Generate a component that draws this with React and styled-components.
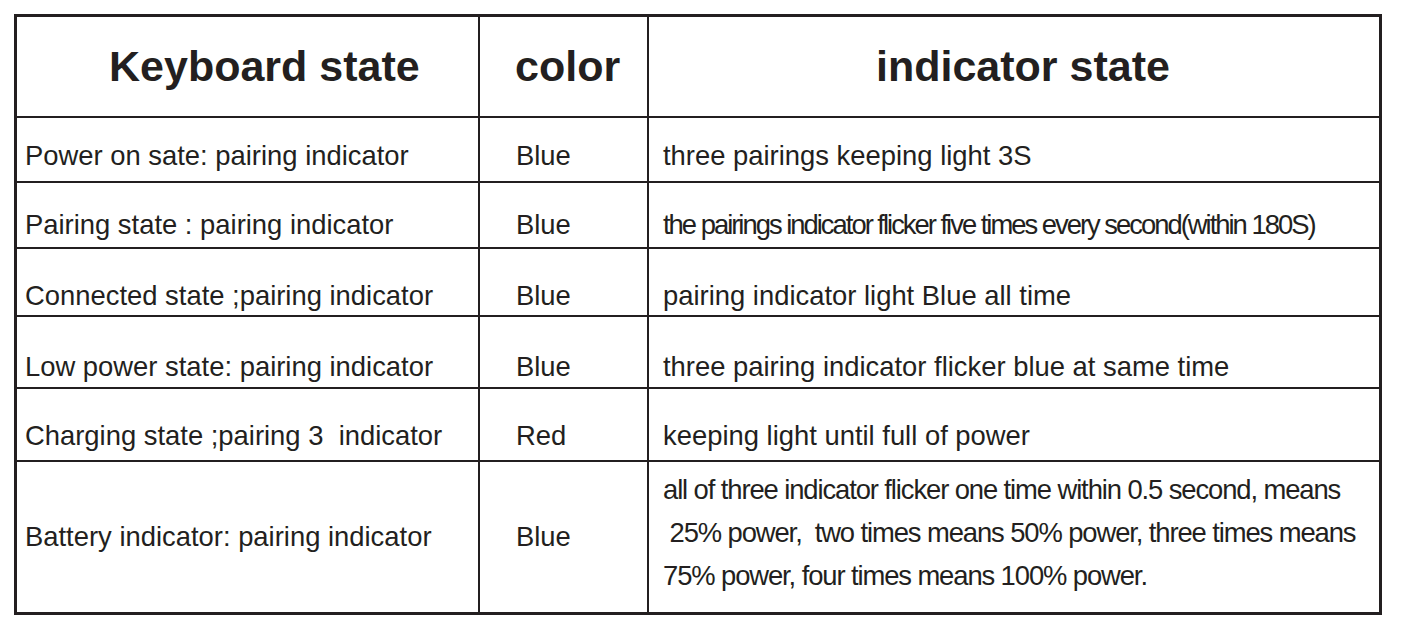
import styled, { createGlobalStyle } from "styled-components"

const GlobalStyle = createGlobalStyle`
body{
margin: 0;
background: #ffffff;
font-family: "Liberation Sans", Arial, sans-serif;
color: #231f20;
}
`

const Page = styled.div`
padding: 14px 0 0 14px;
`

const Table = styled.div`
display: grid;
width: 1362px;
grid-template-columns: 461px 167px 730px;
grid-template-rows: 99px 63px 64px 66px 70px 71px 150px;
gap: 2px;
background: #231f20;
border: 3px solid #231f20;
`

const HeadCell = styled.div`
background: #ffffff;
font-size: 43px;
font-weight: 700;
line-height: 48px;
padding: 25px 0 0 ${p => p.$pl}px;
white-space: pre;
`

const Cell = styled.div`
background: #ffffff;
font-size: 27.4px;
line-height: ${p => p.$lh || 30}px;
letter-spacing: ${p => p.$ls || 0}px;
padding: ${p => p.$pt}px 0 0 ${p => p.$pl}px;
white-space: pre;
overflow: hidden;
`

const Tight = styled.span`
letter-spacing: -2px;
`

const rows = [
  { pt: 23, state: "Power on sate: pairing indicator", color: "Blue", text: "three pairings keeping light 3S" },
  { pt: 27, state: "Pairing state : pairing indicator", color: "Blue", text: "the pairings indicator flicker five times every second(within 180S)", tight: true },
  { pt: 32, state: "Connected state ;pairing indicator", color: "Blue", text: "pairing indicator light Blue all time" },
  { pt: 35, state: "Low power state: pairing indicator", color: "Blue", text: "three pairing indicator flicker blue at same time" },
  { pt: 32, state: "Charging state ;pairing 3  indicator", color: "Red", text: "keeping light until full of power" },
]

const battery = [
  "all of three indicator flicker one time within 0.5 second, means",
  " 25% power,  two times means 50% power, three times means",
  "75% power, four times means 100% power.",
].join("\n")

export default function App() {
  return (
    <Page>
      <GlobalStyle />
      <Table>
        <HeadCell $pl={92}>Keyboard state</HeadCell>
        <HeadCell $pl={35}>color</HeadCell>
        <HeadCell $pl={227}>indicator state</HeadCell>

        {rows.map(r => (
          <>
            <Cell $pt={r.pt} $pl={8}>{r.state}</Cell>
            <Cell $pt={r.pt} $pl={36}>{r.color}</Cell>
            <Cell $pt={r.pt} $pl={14}>{r.tight ? <Tight>{r.text}</Tight> : r.text}</Cell>
          </>
        ))}

        <Cell $pt={60} $pl={8}>Battery indicator: pairing indicator</Cell>
        <Cell $pt={60} $pl={36}>Blue</Cell>
        <Cell $pt={6} $pl={14} $lh={43.2} $ls={-1.1}>{battery}</Cell>
      </Table>
    </Page>
  )
}
